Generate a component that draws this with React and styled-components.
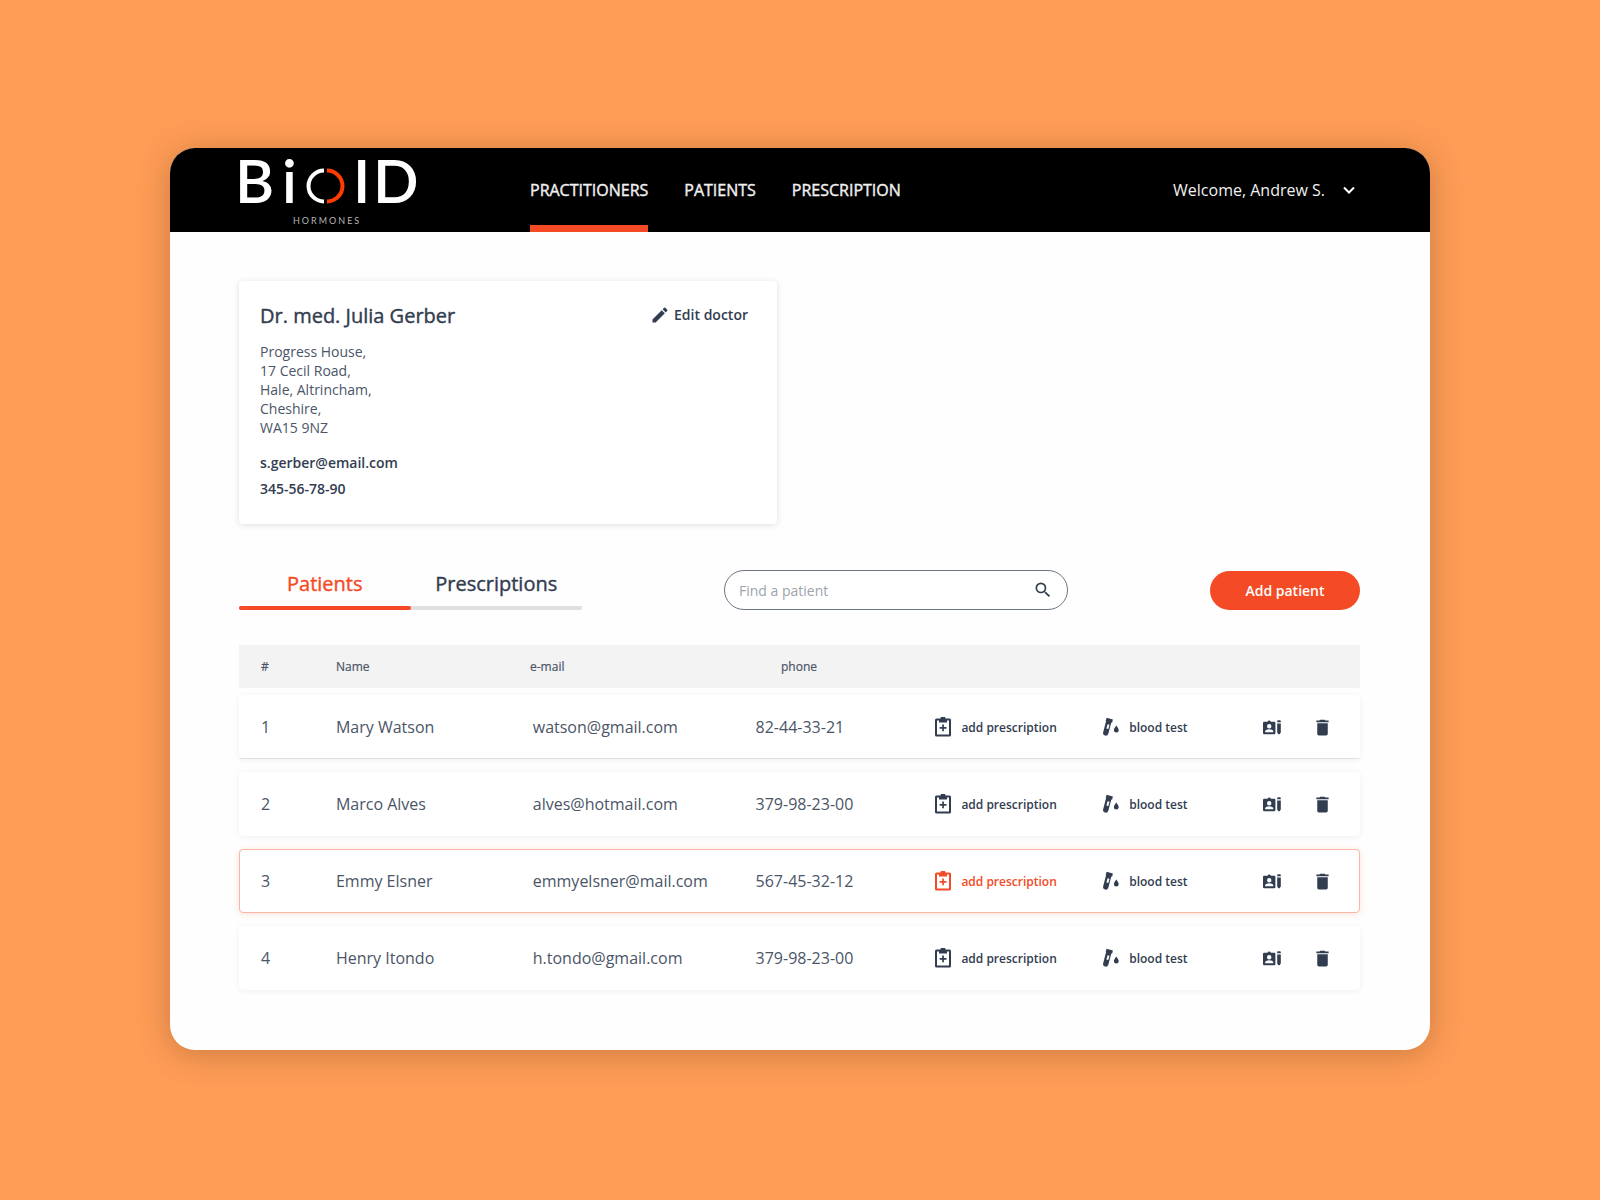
import React from "react";
import styled, { createGlobalStyle, css } from "styled-components";
import { MdEdit, MdSearch, MdDelete } from "react-icons/md";

const color = {
  page: "#ff9d57",
  accent: "#f44a25",
  ink: "#323d50",
  text: "#4b5567",
  muted: "#9ea3ac",
  line: "#e0e0e0",
  head: "#f3f3f3",
};

const GlobalStyle = createGlobalStyle`
  *, *::before, *::after { box-sizing: border-box; }
  body {
    margin: 0;
    background: ${color.page};
    color: ${color.text};
    font-family: "Open Sans", "Noto Sans", sans-serif;
  }
`;

const plainButton = css`
  display: inline-flex;
  align-items: center;
  padding: 0;
  border: 0;
  background: none;
  color: inherit;
  font-family: inherit;
  cursor: pointer;
`;

/* Open Sans has no medium cut here, so a hairline stroke thickens the regular one. */
const mediumText = css`
  font-weight: 400;
  -webkit-text-stroke: 0.4px currentColor;
`;

const Page = styled.div`
  min-height: 100vh;
  padding: 148px 24px;
`;

const Window = styled.div`
  max-width: 1260px;
  margin: 0 auto;
  border-radius: 25px;
  background: #fefefe;
  box-shadow: 0 4px 32px rgba(90, 50, 20, 0.32);
`;

const Header = styled.header`
  display: flex;
  align-items: stretch;
  height: 84px;
  padding: 0 74px 0 69px;
  border-radius: 25px 25px 0 0;
  background: #000;
  color: #f0f0f0;
`;

const Logo = styled.a`
  display: block;
  width: 180px;
  margin-right: 111px;
`;

const LogoDrawing = styled.svg`
  display: block;
  overflow: visible;
`;

const Nav = styled.nav`
  display: flex;
  gap: 36px;
`;

const NavLink = styled.a`
  ${mediumText}
  display: flex;
  align-items: center;
  padding-top: 7px;
  border-bottom: 7px solid ${(p) => (p.$active ? color.accent : "transparent")};
  color: inherit;
  font-size: 16px;
  text-decoration: none;
`;

const UserMenu = styled.button`
  ${plainButton}
  gap: 17px;
  margin-left: auto;
  font-size: 16px;
`;

const Content = styled.main`
  padding: 49px 70px 60px 69px;
`;

const DoctorCard = styled.section`
  display: flex;
  align-items: flex-start;
  justify-content: space-between;
  max-width: 538px;
  padding: 21px 29px 22px 21px;
  border-radius: 4px;
  background: #fff;
  box-shadow: 0 1px 6px rgba(0, 0, 0, 0.13);
`;

const DoctorName = styled.h1`
  ${mediumText}
  margin: 0 0 12px;
  color: ${color.ink};
  font-size: 20px;
  line-height: 28px;
`;

const Address = styled.address`
  font-size: 14px;
  font-style: normal;
  line-height: 19px;
`;

const Contacts = styled.div`
  display: grid;
  justify-items: start;
  margin-top: 13px;
`;

const Contact = styled.a`
  color: ${color.ink};
  font-size: 14px;
  font-weight: 600;
  line-height: 26px;
  text-decoration: none;
`;

const EditButton = styled.button`
  ${plainButton}
  gap: 4px;
  color: ${color.ink};
  font-size: 14px;
  font-weight: 600;
  line-height: 26px;
`;

const Toolbar = styled.div`
  display: flex;
  align-items: center;
  justify-content: space-between;
  margin: 46px 0 35px;
`;

const Tabs = styled.div`
  display: grid;
  grid-template-columns: 1fr 1fr;
  width: 343px;
  border-radius: 2px;
  background: linear-gradient(${color.line}, ${color.line}) bottom / 100% 4px no-repeat;
`;

const Tab = styled.button`
  ${mediumText}
  padding: 0;
  border: 0;
  background: none;
  color: ${(p) => (p.$active ? color.accent : color.ink)};
  font-family: inherit;
  font-size: 20px;
  line-height: 28px;
  cursor: pointer;

  &::after {
    content: "";
    display: block;
    height: 4px;
    margin-top: 8px;
    border-radius: 2px;
    background: ${(p) => (p.$active ? color.accent : "transparent")};
  }
`;

const Search = styled.label`
  display: flex;
  align-items: center;
  width: 344px;
  height: 40px;
  padding: 0 14px;
  border: 1px solid #6d7583;
  border-radius: 20px;
  background: #fff;
  color: ${color.ink};
`;

const SearchInput = styled.input`
  flex: 1;
  min-width: 0;
  padding: 0;
  border: 0;
  outline: 0;
  background: none;
  color: ${color.ink};
  font-family: inherit;
  font-size: 14px;

  &::placeholder {
    color: ${color.muted};
    opacity: 1;
  }
`;

const AddButton = styled.button`
  width: 150px;
  height: 39px;
  border: 0;
  border-radius: 20px;
  background: ${color.accent};
  color: #fff;
  font-family: inherit;
  font-size: 14px;
  font-weight: 600;
  cursor: pointer;
`;

const Table = styled.table`
  display: block;
`;

const TableHead = styled.thead`
  display: block;
  margin-bottom: 7px;
  background: ${color.head};
`;

const TableBody = styled.tbody`
  display: grid;
  gap: 13px;
`;

const HeadRow = styled.tr`
  display: grid;
  grid-template-columns: 75fr 194fr 251fr 579fr;
  align-items: center;
  height: 43px;
  padding-left: 22px;
`;

const HeadCell = styled.th`
  ${mediumText}
  -webkit-text-stroke-width: 0.2px;
  padding: 0;
  font-size: 12px;
  text-align: left;
`;

const Row = styled.tr`
  display: grid;
  grid-template-columns: 75fr 197fr 223fr 180fr 168fr 160fr 49fr 47fr;
  align-items: center;
  height: 64px;
  padding-left: 21px;
  border: 1px solid transparent;
  border-radius: 4px;
  background: #fff;
  box-shadow: 0 1px 6px rgba(0, 0, 0, 0.06);

  ${(p) =>
    p.$underlined &&
    css`
      border-bottom-color: ${color.line};
      border-radius: 4px 4px 0 0;
    `}

  ${(p) =>
    p.$selected &&
    css`
      border-color: #fcb5a3;
      box-shadow: 0 1px 6px rgba(244, 110, 37, 0.18);
    `}
`;

const Cell = styled.td`
  display: flex;
  align-items: center;
  padding: 0;
  font-size: 16px;
`;

const RowAction = styled.button`
  ${plainButton}
  gap: ${(p) => p.$gap || 0}px;
  color: ${(p) => (p.$active ? color.accent : color.ink)};
  font-size: 12px;
  font-weight: 600;
`;

const LogoMark = () => (
  <LogoDrawing width="180" height="84" viewBox="0 0 180 84" aria-hidden="true">
    <g fill="#fff" fontFamily="Lato, sans-serif" fontSize="60" fontWeight="600">
      <text x="-4" y="55">B</text>
      <text x="43" y="55">i</text>
      <text x="114" y="55">I</text>
      <text x="134" y="55">D</text>
    </g>
    <path d="M85 22.500A15.500 15.500 0 0 0 85 53.500" fill="none" stroke="#fff" strokeWidth="4" />
    <path d="M88 22.500A15.500 15.500 0 0 1 88 53.500" fill="none" stroke="#ff3c00" strokeWidth="4" />
    <text x="54" y="76" fill="#b4b4b4" fontFamily="Lato, sans-serif" fontSize="9" letterSpacing="2">
      HORMONES
    </text>
  </LogoDrawing>
);

const ChevronIcon = () => (
  <svg width="14" height="14" viewBox="0 0 14 14" aria-hidden="true">
    <path d="M2 4.500l5 5 5-5" fill="none" stroke="#fff" strokeWidth="2" />
  </svg>
);

const ClipboardIcon = () => (
  <svg width="16" height="20" viewBox="0 0 16 20" fill="currentColor" aria-hidden="true">
    <path
      fillRule="evenodd"
      d="M1.500 1.500h4a2.500 2.200 0 0 1 5 0h4A1.500 1.500 0 0 1 16 3v15a1.500 1.500 0 0 1-1.500 1.500h-13A1.500 1.500 0 0 1 0 18V3a1.500 1.500 0 0 1 1.500-1.500zM2 3.500v14h12v-14h-2v2H4v-2z"
    />
    <path d="M7.200 7.500h1.700V10h2.600v1.700H8.900v2.600H7.200v-2.600H4.600V10h2.600z" />
  </svg>
);

const BloodTestIcon = () => (
  <svg width="16" height="20" viewBox="0 0 16 20" fill="currentColor" aria-hidden="true">
    <path
      fillRule="evenodd"
      d="M3.600.8l6.300 1.700-.8 3.200-.8-.2-3 11.300a2.700 2.700 0 0 1-5.200-1.400L3.100 4.100l-.4-.1zM4.600 7.200l-1.200 4.400 1.900.5 1.200-4.400z"
    />
    <path d="M13.300 8.500c1.200 1.800 2.400 3.200 2.400 4.700a2.400 2.400 0 0 1-4.800 0c0-1.500 1.200-2.900 2.400-4.700z" />
  </svg>
);

const RecordIcon = () => (
  <svg width="18" height="15" viewBox="0 0 18 15" fill="currentColor" aria-hidden="true">
    <path
      fillRule="evenodd"
      d="M1.200 1.800h3.300a1.800 1.800 0 0 1 3.400 0h3.300a1.200 1.200 0 0 1 1.200 1.200v10a1.200 1.200 0 0 1-1.200 1.200h-10A1.200 1.200 0 0 1 0 13V3a1.200 1.200 0 0 1 1.200-1.200zM6.200 4a2.200 2.200 0 1 0 0 4.400A2.200 2.200 0 0 0 6.200 4zM2.100 12.300h8.200v-.9c0-1.400-2.700-2.200-4.100-2.200s-4.100.8-4.100 2.200z"
    />
    <path d="M14.200 1.200A.9.900 0 0 1 15.100.3h1.800a.9.900 0 0 1 .9.900v1h-3.600zM14.200 3.400h3.600v9l-1.200 1.800h-1.200l-1.200-1.800z" />
  </svg>
);

const patients = [
  { id: 1, name: "Mary Watson", email: "watson@gmail.com", phone: "82-44-33-21", underlined: true },
  { id: 2, name: "Marco Alves", email: "alves@hotmail.com", phone: "379-98-23-00" },
  { id: 3, name: "Emmy Elsner", email: "emmyelsner@mail.com", phone: "567-45-32-12", selected: true },
  { id: 4, name: "Henry Itondo", email: "h.tondo@gmail.com", phone: "379-98-23-00" },
];

const PatientRow = ({ patient }) => (
  <Row $underlined={patient.underlined} $selected={patient.selected}>
    <Cell>{patient.id}</Cell>
    <Cell>{patient.name}</Cell>
    <Cell>{patient.email}</Cell>
    <Cell>{patient.phone}</Cell>
    <Cell>
      <RowAction type="button" $gap={10} $active={patient.selected}>
        <ClipboardIcon />
        add prescription
      </RowAction>
    </Cell>
    <Cell>
      <RowAction type="button" $gap={10}>
        <BloodTestIcon />
        blood test
      </RowAction>
    </Cell>
    <Cell>
      <RowAction type="button" aria-label="Patient record">
        <RecordIcon />
      </RowAction>
    </Cell>
    <Cell>
      <RowAction type="button" aria-label="Delete patient">
        <MdDelete size={21} />
      </RowAction>
    </Cell>
  </Row>
);

export default function App() {
  return (
    <>
      <GlobalStyle />
      <Page>
        <Window>
          <Header>
            <Logo href="#" aria-label="BioID Hormones">
              <LogoMark />
            </Logo>
            <Nav>
              <NavLink href="#practitioners" $active>PRACTITIONERS</NavLink>
              <NavLink href="#patients">PATIENTS</NavLink>
              <NavLink href="#prescription">PRESCRIPTION</NavLink>
            </Nav>
            <UserMenu type="button">
              Welcome, Andrew S.
              <ChevronIcon />
            </UserMenu>
          </Header>
          <Content>
            <DoctorCard>
              <div>
                <DoctorName>Dr. med. Julia Gerber</DoctorName>
                <Address>
                  Progress House,<br />
                  17 Cecil Road,<br />
                  Hale, Altrincham,<br />
                  Cheshire,<br />
                  WA15 9NZ
                </Address>
                <Contacts>
                  <Contact href="mailto:s.gerber@email.com">s.gerber@email.com</Contact>
                  <Contact href="tel:345567890">345-56-78-90</Contact>
                </Contacts>
              </div>
              <EditButton type="button">
                <MdEdit size={20} />
                Edit doctor
              </EditButton>
            </DoctorCard>
            <Toolbar>
              <Tabs role="tablist">
                <Tab type="button" role="tab" aria-selected="true" $active>Patients</Tab>
                <Tab type="button" role="tab" aria-selected="false">Prescriptions</Tab>
              </Tabs>
              <Search>
                <SearchInput type="text" placeholder="Find a patient" aria-label="Find a patient" />
                <MdSearch size={20} />
              </Search>
              <AddButton type="button">Add patient</AddButton>
            </Toolbar>
            <Table>
              <TableHead>
                <HeadRow>
                  <HeadCell scope="col">#</HeadCell>
                  <HeadCell scope="col">Name</HeadCell>
                  <HeadCell scope="col">e-mail</HeadCell>
                  <HeadCell scope="col">phone</HeadCell>
                </HeadRow>
              </TableHead>
              <TableBody>
                {patients.map((patient) => (
                  <PatientRow key={patient.id} patient={patient} />
                ))}
              </TableBody>
            </Table>
          </Content>
        </Window>
      </Page>
    </>
  );
}
